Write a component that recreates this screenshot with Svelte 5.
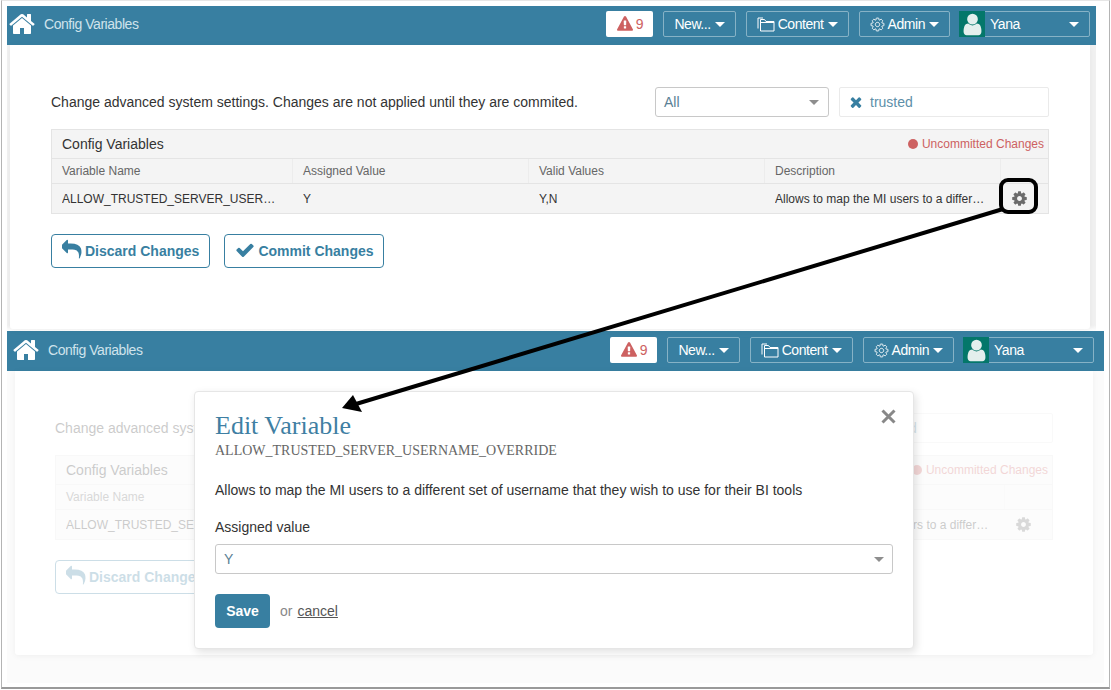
<script lang="ts">
  // Two stacked captures of the config variables page, the lower one dimmed behind the edit dialog.
  const icons = {
    home: "M1408 992v480q0 26-19 45t-45 19h-384v-384h-256v384h-384q-26 0-45-19t-19-45v-480q0-1 .5-3t.5-3l575-474 575 474q1 2 1 6zm223-69l-62 74q-8 9-21 11h-3q-13 0-21-7l-692-577-692 577q-12 8-24 7-13-2-21-11l-62-74q-8-10-7-23.500t11-21.500l719-599q32-26 76-26t76 26l244 204v-195q0-14 9-23t23-9h192q14 0 23 9t9 23v408l219 182q10 8 11 21.500t-7 23.500z",
    warn: "M1024 1375v-190q0-14-9.500-23.500t-22.500-9.500h-192q-13 0-22.500 9.500t-9.500 23.500v190q0 14 9.500 23.500t22.500 9.500h192q13 0 22.500-9.500t9.500-23.500zm-2-374l18-459q0-12-10-19-13-11-24-11h-220q-11 0-24 11-10 7-10 21l17 457q0 10 10 16.500t24 6.500h185q14 0 23.500-6.500t10.500-16.500zm-14-934l768 1408q35 63-2 126-17 29-46.500 46t-63.500 17h-1536q-34 0-63.500-17t-46.500-46q-37-63-2-126l768-1408q17-31 47-49t65-18 65 18 47 49z",
    cog: "M1152 896q0-106-75-181t-181-75-181 75-75 181 75 181 181 75 181-75 75-181zm512-109v222q0 12-8 23t-20 13l-185 28q-19 54-39 91 35 50 107 138 10 12 10 25t-9 23q-27 37-99 108t-94 71q-12 0-26-9l-138-108q-44 23-91 38-16 136-29 186-7 28-36 28h-222q-14 0-24.500-8.500t-11.500-21.500l-28-184q-49-16-90-37l-141 107q-10 9-25 9-14 0-25-11-126-114-165-168-7-10-7-23 0-12 8-23 15-21 51-66.500t54-70.500q-27-50-41-99l-183-27q-13-2-21-12.500t-8-23.500v-222q0-12 8-23t19-13l186-28q14-46 39-92-40-57-107-138-10-12-10-24 0-10 9-23 26-36 98.500-107.500t94.500-71.500q13 0 26 10l138 107q44-23 91-38 16-136 29-186 7-28 36-28h222q14 0 24.500 8.500t11.500 21.500l28 184q49 16 90 37l142-107q9-9 24-9 13 0 25 10 129 119 165 170 7 8 7 22 0 12-8 23-15 21-51 66.500t-54 70.500q26 50 41 98l183 28q13 2 21 12.500t8 23.500z",
    check: "M1671 566q0 40-28 68l-724 724-136 136q-28 28-68 28t-68-28l-136-136-362-362q-28-28-28-68t28-68l136-136q28-28 68-28t68 28l294 295 656-657q28-28 68-28t68 28l136 136q28 28 28 68z",
    times: "M1490 1322q0 40-28 68l-136 136q-28 28-68 28t-68-28l-294-294-294 294q-28 28-68 28t-68-28l-136-136q-28-28-28-68t28-68l294-294-294-294q-28-28-28-68t28-68l136-136q28-28 68-28t68 28l294 294 294-294q28-28 68-28t68 28l136 136q28 28 28 68t-28 68l-294 294 294 294q28 28 28 68z",
    reply: "M1664 1120q0 166-127 451-3 7-10.500 24t-13.500 30-13 22q-12 17-28 17-15 0-23.500-10t-8.500-25q0-9 2.500-26.500t2.500-23.500q5-68 5-123 0-101-17.500-181t-48.500-138.500-80-101-105.500-69.500-133-42.500-154-21.500-175.500-6h-224v256q0 26-19 45t-45 19-45-19l-512-512q-19-19-19-45t19-45l512-512q19-19 45-19t45 19 19 45v256h224q713 0 875 403 53 134 53 333z",
    user: "M1536 1399q0 109-62.500 187t-150.500 78h-854q-88 0-150.500-78t-62.500-187q0-85 8.500-160.500t31.500-152 58.500-131 94-89 134.500-34.500q131 128 313 128t313-128q76 0 134.500 34.500t94 89 58.500 131 31.500 152 8.500 160.500zm-256-887q0 159-112.500 271.500t-271.500 112.500-271.500-112.500-112.500-271.500 112.500-271.500 271.500-112.500 271.500 112.500 112.500 271.500z",
  };
  const columns = ["Variable Name", "Assigned Value", "Valid Values", "Description"];
  const row = ["ALLOW_TRUSTED_SERVER_USERNAME_OVERRIDE", "Y", "Y,N", "Allows to map the MI users to a different set of username that they wish to use for their BI tools"];
</script>

{#snippet icon(d: string, size: number, cls = "")}
  <svg class={cls} width={size} height={size} viewBox="0 0 1792 1792"><path {d} /></svg>
{/snippet}

{#snippet shot(kind: string)}
  <section class="shot {kind}">
    <header class="bar">
      {@render icon(icons.home, 28, "home")}
      <span class="title">Config Variables</span>
      <div class="alert">{@render icon(icons.warn, 16)}<span>9</span></div>
      <div class="nav">New... <i class="caret"></i></div>
      <div class="nav">
        <svg class="folder" width="18" height="15" viewBox="0 0 18 15"><path d="M3.500 13.500V2.500h4l1.500 2h8v9.500H3.500V5.500h13.500M1 11.500V1h5" /></svg>
        Content <i class="caret"></i>
      </div>
      <div class="nav">
        <svg class="gear" width="15" height="15" viewBox="0 0 1792 1792"><path d={icons.cog} /></svg>
        Admin <i class="caret"></i>
      </div>
      <div class="nav account">
        <span class="avatar">{@render icon(icons.user, 25)}</span>
        <span class="who">Yana</span>
        <i class="caret"></i>
      </div>
    </header>
    <div class="body">
      <div class="card">
        <div class="fade">
          <div class="intro">
            <p>Change advanced system settings. Changes are not applied until they are commited.</p>
            <div class="select all">All <i class="caret grey"></i></div>
            <div class="search">{@render icon(icons.times, 16)}<span>trusted</span></div>
          </div>
          <div class="table">
            <div class="table-title">
              <span>Config Variables</span>
              <span class="dirty"><i class="dot"></i>Uncommitted Changes</span>
            </div>
            <div class="cols heads">
              {#each columns as c}<div class="cell">{c}</div>{/each}
              <div class="cell"></div>
            </div>
            <div class="cols values">
              {#each row as c}<div class="cell"><span class="clip">{c}</span></div>{/each}
              <div class="cell tool">{@render icon(icons.cog, 17)}</div>
            </div>
          </div>
          <div class="actions">
            <button class="outline">{@render icon(icons.reply, 21)}Discard Changes</button>
            <button class="outline commit">{@render icon(icons.check, 20)}Commit Changes</button>
          </div>
        </div>
      </div>
    </div>
  </section>
{/snippet}

<div class="frame">
  {@render shot("first")}
  {@render shot("second")}

  <div class="modal">
    <button class="close" aria-label="Close">
      <svg width="15" height="15" viewBox="0 0 15 15"><path d="M1.500 1.500l12 12M13.500 1.500l-12 12" /></svg>
    </button>
    <h2>Edit Variable</h2>
    <h3>ALLOW_TRUSTED_SERVER_USERNAME_OVERRIDE</h3>
    <p class="desc">Allows to map the MI users to a different set of username that they wish to use for their BI tools</p>
    <div class="label">Assigned value</div>
    <div class="select value">Y <i class="caret grey"></i></div>
    <div class="foot">
      <button class="save">Save</button>
      <span class="or">or</span>
      <span class="cancel">cancel</span>
    </div>
  </div>

  <div class="callout"></div>
  <svg class="arrow" width="1111" height="690" viewBox="0 0 1111 690">
    <line x1="1003" y1="209" x2="356" y2="404" />
    <polygon points="342,408 353,395 362,412" />
  </svg>
</div>

<style>
  :global(body) {
    margin: 0;
    background: #fff;
    font-family: "Liberation Sans", Arial, sans-serif;
  }
  .frame {
    position: relative;
    box-sizing: border-box;
    width: 1109px;
    height: 689px;
    margin-left: 1px;
    padding: 5px 0 0 5px;
    border-left: 1px solid #b4b4b4;
    border-right: 1px solid #b4b4b4;
    border-top: 1px solid #e6e6e6;
    border-bottom: 2px solid #9a9a9a;
    overflow: hidden;
  }
  .first {
    width: 1089px;
  }
  .second {
    width: 1097px;
  }
  .bar {
    box-sizing: border-box;
    display: flex;
    align-items: center;
    background: #387fa1;
    color: #fff;
    font-size: 14px;
    letter-spacing: -0.45px;
  }
  .first .bar {
    height: 39px;
    padding: 0 6px 3px 2px;
  }
  .second .bar {
    height: 40px;
    padding: 0 10px 2px 6px;
  }
  .bar svg {
    fill: currentColor;
  }
  .home {
    flex: none;
  }
  .title {
    margin: 0 auto 0 7px;
    color: #cfe3ec;
  }
  .alert {
    box-sizing: border-box;
    display: flex;
    align-items: center;
    justify-content: center;
    gap: 3px;
    width: 47px;
    height: 26px;
    background: #fff;
    border-radius: 2px;
    color: #cd6161;
  }
  .nav {
    box-sizing: border-box;
    display: flex;
    align-items: center;
    gap: 4px;
    height: 26px;
    margin-left: 10px;
    padding: 0 10px;
    border: 1px solid #86b2c6;
    border-radius: 2px;
  }
  .bar .folder {
    margin-right: -1px;
    fill: none;
    stroke: #fff;
    stroke-width: 1;
  }
  .bar .gear {
    margin-right: -1px;
    fill: none;
    stroke: #fff;
    stroke-width: 110;
  }
  .caret {
    display: inline-block;
    width: 0;
    height: 0;
    border-left: 5px solid transparent;
    border-right: 5px solid transparent;
    border-top: 5px solid currentColor;
  }
  .caret.grey {
    margin-left: auto;
    color: #8e8e8e;
  }
  .account {
    width: 131px;
    margin-left: 9px;
    padding: 0 10px 0 0;
  }
  .avatar {
    display: flex;
    align-items: center;
    justify-content: center;
    width: 26px;
    height: 26px;
    margin: -1px 0 -1px -1px;
    background: #04776a;
    color: #e4efed;
  }
  .who {
    margin: 0 auto 0 1px;
  }
  .body {
    display: flex;
  }
  .first .body {
    height: 286px;
    padding: 0 6px 2px 3px;
    box-sizing: border-box;
    background: linear-gradient(#f1f1f1 98%, #fff);
  }
  .second .body {
    height: 312px;
    padding: 0 11px 28px 8px;
    box-sizing: border-box;
    background: #fbfbfb;
  }
  .card {
    flex: 1;
    box-sizing: border-box;
    padding: 42px 41px 0;
    background: #fff;
    border-radius: 0 0 3px 3px;
    box-shadow: 0 1px 6px rgba(0, 0, 0, 0.05);
  }
  .second .card {
    padding: 42px 40px 0;
  }
  .second .fade {
    opacity: 0.25;
  }
  .intro {
    display: flex;
    align-items: center;
    height: 30px;
  }
  .intro p {
    flex: 1;
    margin: 0;
    font-size: 14px;
    color: #333;
  }
  .select {
    box-sizing: border-box;
    display: flex;
    align-items: center;
    height: 30px;
    padding: 0 8px;
    background: #fff;
    border: 1px solid #c8c8c8;
    border-radius: 3px;
    font-size: 14px;
    color: #5a7f95;
  }
  .all {
    width: 174px;
    padding-right: 9px;
  }
  .search {
    box-sizing: border-box;
    display: flex;
    align-items: center;
    gap: 6px;
    width: 210px;
    height: 30px;
    margin-left: 10px;
    padding: 0 8px;
    border: 1px solid #eaeaea;
    border-radius: 2px;
    font-size: 14px;
    color: #5d8fa9;
  }
  .search svg {
    fill: #387fa1;
  }
  .table {
    margin-top: 12px;
    border: 1px solid #e4e4e4;
    background: #f4f4f4;
    color: #333;
  }
  .table-title {
    display: flex;
    align-items: center;
    justify-content: space-between;
    height: 28px;
    padding: 0 4px 0 10px;
    font-size: 14px;
    border-bottom: 1px solid #e4e4e4;
  }
  .dirty {
    display: flex;
    align-items: center;
    gap: 4px;
    font-size: 12px;
    color: #cd6161;
  }
  .dot {
    width: 10px;
    height: 10px;
    border-radius: 50%;
    background: #cd6161;
  }
  .cols {
    display: grid;
    grid-template-columns: 240px 236px 236px 236px 1fr;
    height: 29px;
    font-size: 12px;
  }
  .heads {
    height: 24px;
    color: #666;
    border-bottom: 1px solid #e4e4e4;
  }
  .cell {
    display: flex;
    align-items: center;
    padding: 0 10px;
    min-width: 0;
  }
  .heads .cell + .cell {
    border-left: 1px solid #ececec;
  }
  .values .cell {
    padding-right: 15px;
  }
  .values .cell + .cell {
    padding-left: 11px;
  }
  .clip {
    overflow: hidden;
    white-space: nowrap;
    text-overflow: ellipsis;
  }
  .values .tool {
    padding: 0 0 1px 8px;
    fill: #6b6b6b;
  }
  .actions {
    display: flex;
    gap: 14px;
    margin-top: 20px;
  }
  button {
    font-family: inherit;
    cursor: pointer;
  }
  .outline {
    box-sizing: border-box;
    display: flex;
    align-items: center;
    gap: 2px;
    height: 34px;
    padding: 0 10px;
    background: #fff;
    border: 1px solid #387fa1;
    border-radius: 4px;
    font-size: 14px;
    font-weight: 700;
    color: #387fa1;
    fill: #387fa1;
  }
  .outline svg {
    margin-top: -3px;
  }
  .commit {
    gap: 3px;
    padding-right: 9px;
  }
  .modal {
    position: absolute;
    left: 192px;
    top: 390px;
    box-sizing: border-box;
    width: 720px;
    height: 258px;
    padding: 20px 20px 0;
    background: #fff;
    border: 1px solid #e6e6e6;
    border-radius: 4px;
    box-shadow: 2px 3px 8px rgba(0, 0, 0, 0.12);
  }
  .close {
    position: absolute;
    right: 17px;
    top: 17px;
    display: flex;
    padding: 0;
    border: 0;
    background: none;
    fill: none;
    stroke: #888;
    stroke-width: 3;
  }
  h2 {
    margin: 0;
    font: 400 26px/28px "Liberation Serif", serif;
    color: #3f7fa3;
  }
  h3 {
    margin: 3px 0 0;
    font: 400 14px/16px "Liberation Serif", serif;
    color: #666;
  }
  .desc {
    margin: 23px 0 0;
    font-size: 14px;
    line-height: 16px;
    color: #333;
  }
  .label {
    margin-top: 21px;
    font-size: 14px;
    line-height: 16px;
    color: #333;
  }
  .value {
    margin-top: 9px;
  }
  .foot {
    display: flex;
    align-items: center;
    margin-top: 20px;
    font-size: 14px;
  }
  .save {
    width: 55px;
    height: 34px;
    padding: 0;
    border: 0;
    border-radius: 4px;
    background: #387fa1;
    color: #fff;
    font-size: 14px;
    font-weight: 700;
  }
  .or {
    margin-left: 10px;
    color: #888;
  }
  .cancel {
    margin-left: 5px;
    color: #555;
    text-decoration: underline;
  }
  .callout {
    position: absolute;
    left: 997px;
    top: 177px;
    box-sizing: border-box;
    width: 39px;
    height: 36px;
    border: 4px solid #000;
    border-radius: 9px;
  }
  .arrow {
    position: absolute;
    left: -2px;
    top: -1px;
    pointer-events: none;
  }
  .arrow line {
    stroke: #000;
    stroke-width: 4;
  }
</style>
